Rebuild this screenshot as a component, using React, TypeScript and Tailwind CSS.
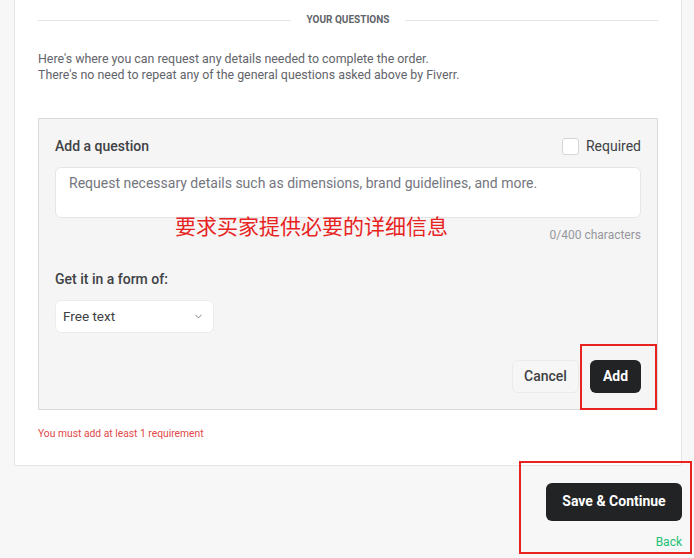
import { ChevronDown } from 'lucide-react';

const font = { fontFamily: 'Roboto, "Liberation Sans", sans-serif' };

function Divider({ label }: { label: string }) {
  return (
    <div className="flex items-center gap-4">
      <div className="h-px flex-1 bg-[#e4e5e7]" />
      <span className="text-[10px] font-bold uppercase leading-4 text-[#62646a]">{label}</span>
      <div className="h-px flex-1 bg-[#e4e5e7]" />
    </div>
  );
}

function QuestionForm() {
  return (
    <div className="mt-[35px] border border-[#dadbdd] bg-[#f5f5f5] px-4 pb-4 pt-[17px]">
      <div className="flex h-5 items-center justify-between">
        <span className="text-[14px] font-medium text-[#404145]">Add a question</span>
        <label className="flex items-center gap-[7px]">
          <span className="h-[17px] w-[17px] rounded-[3px] border border-[#d5d6d9] bg-white" />
          <span className="text-[14px] text-[#404145]">Required</span>
        </label>
      </div>
      <div className="mt-[11px] h-[51px] rounded-md border border-[#e4e5e7] bg-white px-[13px] pt-[5px] text-[14px] leading-5 text-[#74767e]">
        Request necessary details such as dimensions, brand guidelines, and more.
      </div>
      <div className="mt-[9px] text-right text-[12px] leading-4 text-[#95979d]">0/400 characters</div>
      <div className="mt-[26px] text-[14px] font-medium leading-5 text-[#404145]">Get it in a form of:</div>
      <div className="mt-[11px] flex h-[33px] w-[159px] items-center justify-between rounded-md border border-[#ececec] bg-white pl-[7px] pr-[9px]">
        <span className="text-[13.5px] text-[#404145]">Free text</span>
        <ChevronDown className="h-[11px] w-[11px] text-[#74767e]" strokeWidth={2} />
      </div>
      <div className="mt-[27px] flex justify-end gap-[11px]">
        <button className="h-[33px] w-[67px] rounded-md border border-[#ebebeb] bg-[#f6f6f6] text-[14px] font-medium text-[#404145]">
          Cancel
        </button>
        <button className="h-[33px] w-[51px] rounded-md bg-[#222325] text-[14px] font-bold text-white">Add</button>
      </div>
    </div>
  );
}

export default function App() {
  return (
    <div className="relative h-[558px] w-[694px] overflow-hidden bg-[#f7f7f7] pl-[14px] pr-[12px]" style={font}>
      <div className="border border-t-0 border-[#e4e5e7] bg-white px-[23px] pb-[23px] pt-[12px]">
        <Divider label="Your questions" />
        <p className="mt-[23px] text-[12.4px] leading-4 text-[#62646a]">
          Here's where you can request any details needed to complete the order.
          <br />
          There's no need to repeat any of the general questions asked above by Fiverr.
        </p>
        <QuestionForm />
        <p className="mt-[16px] text-[10.3px] leading-4 text-[#df4848]">You must add at least 1 requirement</p>
      </div>
      <div className="mt-[17px] flex flex-col items-end">
        <button className="h-[38px] w-[136px] rounded-md bg-[#222325] pb-[2px] text-[14px] font-bold text-white">Save &amp; Continue</button>
        <a className="mt-[13px] text-[12px] leading-4 text-[#1dbf73]">Back</a>
      </div>

      {/* annotation overlays */}
      <span
        className="absolute left-[175px] top-[212px] text-[21px] leading-[26px] text-[#e8231f]"
        style={{ fontFamily: '"Noto Sans CJK SC", sans-serif' }}
      >
        要求买家提供必要的详细信息
      </span>
      <div className="absolute left-[580px] top-[344px] h-[66px] w-[77px] border-2 border-[#e8231f]" />
      <div className="absolute left-[519px] top-[461px] h-[93px] w-[173px] border-2 border-[#e8231f]" />
    </div>
  );
}
